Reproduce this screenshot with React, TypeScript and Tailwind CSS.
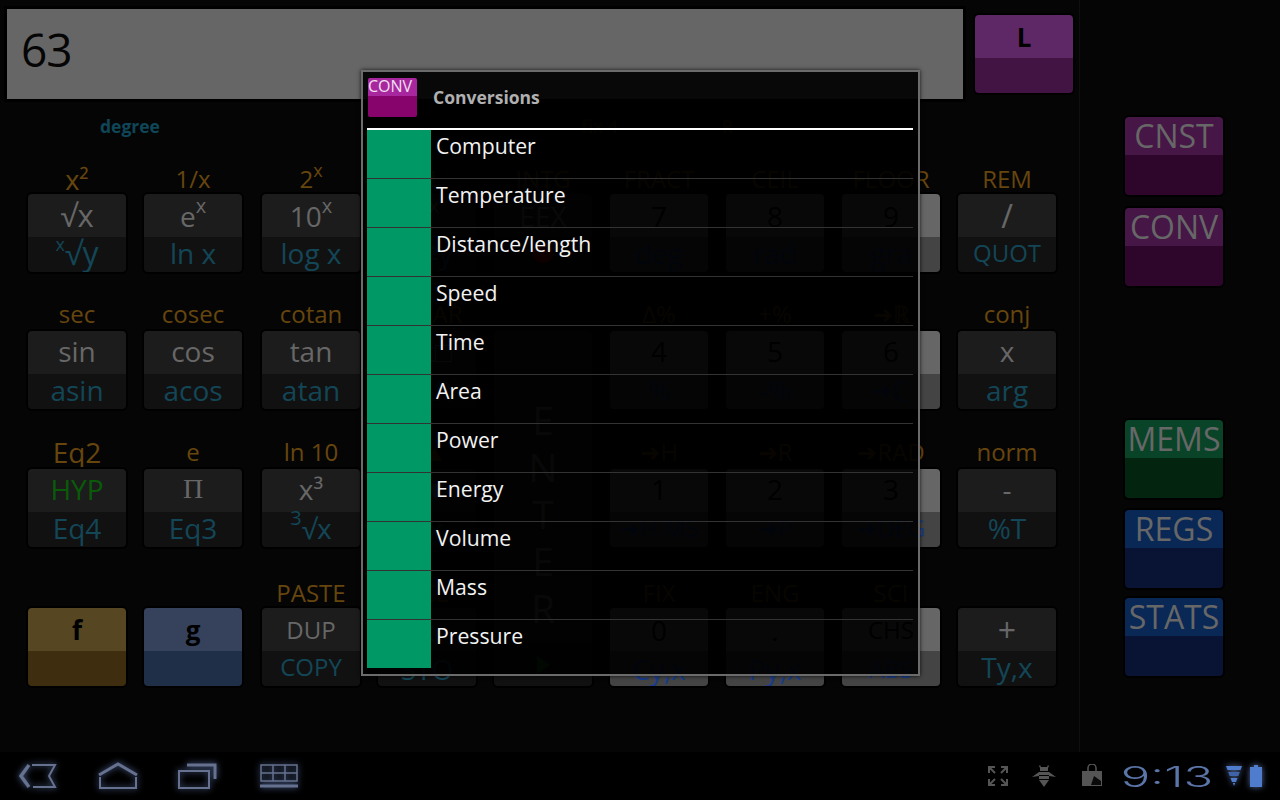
import React from "react";

type KeyDef = {
  label?: React.ReactNode;
  top?: React.ReactNode;
  bottom?: React.ReactNode;
  kind?: "dark" | "light" | "f" | "g";
  topClass?: string;
  bottomClass?: string;
};

const keyColors = {
  dark: ["bg-[#1c1c1c]", "bg-[#111112]", "text-[#676767]", "text-[#134656]"],
  light: ["bg-[#666666]", "bg-[#444444]", "text-[#000000]", "text-[#173c8c]"],
  f: ["bg-[#574622]", "bg-[#3e2d0e]", "text-black", "text-black"],
  g: ["bg-[#36425c]", "bg-[#1f2f47]", "text-black", "text-black"],
};

const X = () => <sup className="text-[20px]">x</sup>;
const Arrow = () => <span className="text-[24px]">➜</span>;
const small = "text-[24px]!";

const rows: KeyDef[][] = [
  [
    { label: <span className="text-[27px]">x²</span>, top: <span className="text-[31px]">√x</span>, bottom: <><sup className="text-[18px]">x</sup><span className="text-[32px]">√y</span></> },
    { label: "1/x", top: <>e<X /></>, bottom: "ln x" },
    { label: <>2<sup className="text-[18px]">x</sup></>, top: <>10<X /></>, bottom: "log x" },
    { label: "x!", top: <>y<X /></>, bottom: "x⇄y" },
    { label: "INTG", top: "EEX", bottom: <span className="inline-block w-5 h-5 rounded-full bg-[#c00000]" /> },
    { label: "FRACT", top: "7", bottom: "deg", kind: "light" },
    { label: "CEIL", top: "8", bottom: "rad", kind: "light" },
    { label: "FLOOR", top: "9", bottom: "gra", kind: "light" },
    { label: "REM", top: "/", bottom: "QUOT", topClass: "text-[32px]!", bottomClass: small },
  ],
  [
    { label: "sec", top: "sin", bottom: "asin" },
    { label: "cosec", top: "cos", bottom: "acos" },
    { label: "cotan", top: "tan", bottom: "atan" },
    { label: "CLEAR", top: "CL□", bottom: "CLR" },
    { label: "Δ%", top: "4", bottom: "%", kind: "light" },
    { label: "+%", top: "5", bottom: "-%", kind: "light" },
    { label: <><Arrow />ℝ</>, top: "6", bottom: <><Arrow />ℂ</>, kind: "light" },
    { label: "conj", top: "x", bottom: "arg" },
  ],
  [
    { label: <span className="text-[28px]">Eq2</span>, top: "HYP", bottom: "Eq4", topClass: "text-[#0a5a0a]!" },
    { label: "e", top: "Π", bottom: "Eq3", topClass: "font-['Liberation_Serif',serif]" },
    { label: "ln 10", top: "x³", bottom: <><sup className="text-[20px]">3</sup>√x</> },
    { label: "R▲", top: "R▼", bottom: "Rx" },
    { label: <><Arrow />H</>, top: "1", bottom: <><Arrow />H.MS</>, kind: "light", bottomClass: small },
    { label: <><Arrow />R</>, top: "2", bottom: <><Arrow />P</>, kind: "light", bottomClass: small },
    { label: <><Arrow />RAD</>, top: "3", bottom: <><Arrow />DEG</>, kind: "light", bottomClass: small },
    { label: "norm", top: "-", bottom: "%T" },
  ],
  [
    { top: "f", kind: "f", topClass: "font-bold text-[26px]!" },
    { top: "g", kind: "g", topClass: "font-bold text-[26px]!" },
    { label: "PASTE", top: "DUP", bottom: "COPY", topClass: small, bottomClass: small },
    { label: "RCL", top: "x", bottom: "STO", bottomClass: "pb-0!" },
    { label: "FIX", top: "0", bottom: "Cy,x", kind: "light", bottomClass: "pb-0!" },
    { label: "ENG", top: ".", bottom: "Py,x", kind: "light", bottomClass: "pb-0!" },
    { label: "SCI", top: "CHS", bottom: "ABS", kind: "light", topClass: small, bottomClass: "text-[24px]! pb-0!" },
    { top: "+", bottom: "Ty,x", topClass: "text-[32px]!" },
  ],
];

const conversions = [
  "Computer",
  "Temperature",
  "Distance/length",
  "Speed",
  "Time",
  "Area",
  "Power",
  "Energy",
  "Volume",
  "Mass",
  "Pressure",
];

const CalcKey = ({ def, row }: { def: KeyDef; row: number }) => {
  const c = keyColors[def.kind ?? "dark"];
  const midRow = row === 1 || row === 2;
  return (
    <div className="flex flex-col items-center w-[98px]">
      <div className={`h-[30px] w-[120px] flex items-center justify-center text-[24px] leading-none text-[#67450e] whitespace-nowrap ${midRow ? "pb-[4px]" : ""}`}>
        {def.label}
      </div>
      <div className="w-[98px] h-[78px] rounded-[4px] overflow-hidden flex flex-col shadow-[0_0_0_2px_#000]">
        <div className={`h-[43px] flex items-center justify-center text-[28px] leading-none whitespace-nowrap ${midRow ? "pb-[4px]" : ""} ${c[0]} ${c[2]} ${def.topClass ?? ""}`}>
          {def.top}
        </div>
        <div className={`h-[35px] flex items-center justify-center text-[28px] leading-none whitespace-nowrap pb-[4px] ${c[1]} ${c[3]} ${def.bottomClass ?? ""}`}>
          {def.bottom}
        </div>
      </div>
    </div>
  );
};

const EnterKey = () => (
  <div className="w-[98px] row-span-3 col-start-5 pt-[30px] h-[385px]">
    <div className="h-[355px] rounded-[4px] overflow-hidden flex flex-col shadow-[0_0_0_2px_#000]">
      <div className="h-[312px] bg-[#1c1c1c] flex flex-col items-center justify-end pb-[12px] text-[39px] leading-[47px] text-[#676767]">
        <span>E</span>
        <span>N</span>
        <span>T</span>
        <span>E</span>
        <span>R</span>
      </div>
      <div className="h-[43px] bg-[#111112] flex items-center justify-center">
        <svg width="14" height="18" viewBox="0 0 14 18">
          <path d="M1 0 L14 9 L1 18 Z" fill="#0a6a12" />
        </svg>
      </div>
    </div>
  </div>
);

const SideKey = ({ text, top, bottom, className }: { text: string; top: string; bottom: string; className?: string }) => (
  <div className={`w-[98px] h-[78px] rounded-[4px] overflow-hidden flex flex-col shadow-[0_0_0_2px_#000] ${className ?? ""}`}>
    <div className={`h-[38px] flex items-center justify-center text-[32px] leading-none text-[#676767] whitespace-nowrap ${top}`}>
      {text}
    </div>
    <div className={`flex-1 ${bottom}`} />
  </div>
);

const navIcon = "drop-shadow-[0_0_3px_rgba(120,150,220,0.7)]";

export default function App() {
  return (
    <div className="relative w-[1280px] h-[800px] overflow-hidden bg-[#050505] font-['Open_Sans',sans-serif] flex flex-col">
      <div className="flex h-[752px]">
        <div className="w-[1080px] border-r border-[#0f0f0f]">
          <div className="flex h-[99px]">
            <div className="ml-[7px] mt-[9px] w-[956px] h-[90px] bg-[#666666] shadow-[0_0_0_3px_#000] pl-[14px] flex items-center text-[46px] tracking-[-1px] text-[#050505] leading-none pb-[11px]">
              63
            </div>
            <div className="ml-[12px] mt-[15px] w-[98px] h-[78px] rounded-[4px] overflow-hidden flex flex-col shadow-[0_0_0_2px_#000]">
              <div className="h-[43px] bg-[#5e2766] flex items-center justify-center font-bold text-[26px] leading-none text-black">L</div>
              <div className="flex-1 bg-[#411443]" />
            </div>
          </div>
          <div className="h-[65px] flex pt-[15px] text-[17.5px] font-bold text-[#0f4658] leading-[24px]">
            <span className="ml-[100px]">degree</span>
            <span className="ml-[421px] text-[#3d2c08]">fix 4</span>
            <span className="ml-[104px] text-[#3d2c08]">R</span>
          </div>
          <div className="pl-[28px] grid grid-cols-[116px_118px_116px_116px_116px_116px_116px_116px_100px] grid-rows-[137px_138px_139px_108px]">
            {rows[0].map((k, i) => (
              <CalcKey key={i} def={k} row={0} />
            ))}
            {rows[1].slice(0, 4).map((k, i) => (
              <CalcKey key={i} def={k} row={1} />
            ))}
            <EnterKey />
            {rows[1].slice(4).map((k, i) => (
              <CalcKey key={i} def={k} row={1} />
            ))}
            {rows[2].slice(0, 4).map((k, i) => (
              <CalcKey key={i} def={k} row={2} />
            ))}
            {rows[2].slice(4).map((k, i) => (
              <div key={i} className={i === 0 ? "col-start-6" : ""}>
                <CalcKey def={k} row={2} />
              </div>
            ))}
            {rows[3].slice(0, 4).map((k, i) => (
              <CalcKey key={i} def={k} row={3} />
            ))}
            {rows[3].slice(4).map((k, i) => (
              <div key={i} className={i === 0 ? "col-start-6" : ""}>
                <CalcKey def={k} row={3} />
              </div>
            ))}
          </div>
        </div>
        <div className="flex-1 pl-[45px] pt-[117px] flex flex-col">
          <SideKey text="CNST" top="bg-[#451646]" bottom="bg-[#2e052b]" />
          <SideKey text="CONV" top="bg-[#451646]" bottom="bg-[#2e052b]" className="mt-[13px]" />
          <SideKey text="MEMS" top="bg-[#094429]" bottom="bg-[#03240e]" className="mt-[134px]" />
          <SideKey text="REGS" top="bg-[#0a2856]" bottom="bg-[#091333]" className="mt-[12px]" />
          <SideKey text="STATS" top="bg-[#0a2856]" bottom="bg-[#091333]" className="mt-[10px]" />
        </div>
      </div>

      <div className="h-[48px] bg-black flex items-center justify-between">
        <div className="flex items-center">
          <svg className={`ml-[18px] ${navIcon}`} width="40" height="28" viewBox="0 0 40 28" fill="none" stroke="#65718f">
            <path d="M11 3 L3 14 L11 25" strokeWidth="3.5" />
            <path d="M14 3 H37 L31 14 L37 25 H15" strokeWidth="2" />
          </svg>
          <svg className={`ml-[39px] ${navIcon}`} width="42" height="28" viewBox="0 0 42 28" fill="none" stroke="#65718f">
            <path d="M2 13 L21 2 L40 13" strokeWidth="3" />
            <path d="M3 15 V26 H39 V15" strokeWidth="2" />
          </svg>
          <svg className={`ml-[38px] ${navIcon}`} width="40" height="28" viewBox="0 0 40 28" fill="none" stroke="#65718f">
            <path d="M10 3 H38 V17" strokeWidth="3" />
            <rect x="2" y="9" width="30" height="17" strokeWidth="2" />
          </svg>
          <svg className={`ml-[43px] ${navIcon}`} width="38" height="28" viewBox="0 0 38 28" fill="none" stroke="#65718f">
            <path d="M1 3 H37 V19 H1 Z M1 11 H37 M13 3 V19 M25 3 V19" strokeWidth="1.5" />
            <path d="M0 24 H38" strokeWidth="3" />
          </svg>
        </div>
        <div className="flex items-center">
          <svg width="20" height="20" viewBox="0 0 20 20" fill="none" stroke="#555555" strokeWidth="2">
            <path d="M1 7 V1 H7 M1 1 L7 7 M13 1 H19 V7 M19 1 L13 7 M1 13 V19 H7 M1 19 L7 13 M19 13 V19 H13 M19 19 L13 13" />
          </svg>
          <svg className="ml-[24px]" width="24" height="24" viewBox="0 0 24 24" fill="#555555">
            <path d="M8 1 L9 3 H15 L16 1 L17 2 L16 4 V7 H8 V4 L7 2 Z" />
            <rect x="7" y="8" width="10" height="3" />
            <rect x="7" y="12" width="10" height="3" />
            <path d="M7 16 H17 L12 23 Z" />
            <path d="M0 13 L7 8 V12 Z M24 13 L17 8 V12 Z" />
          </svg>
          <svg className="ml-[25px]" width="22" height="24" viewBox="0 0 22 24" fill="none">
            <path d="M7 7 V4 A4 4 0 0 1 15 4 V7" stroke="#555555" strokeWidth="1.5" />
            <path d="M1 7 H21 V22 H1 Z" fill="#555555" />
            <path d="M10 21 L13 12 L20 17 V21 Z" fill="#0a0a0a" />
          </svg>
          <div className="ml-[21px] w-[86px] flex justify-center text-[28px] leading-none font-['Inter',sans-serif] font-light text-[#5a75a8] [transform:scaleX(1.75)] pt-[1px]">
            9:13
          </div>
          <svg className={`ml-[16px] ${navIcon}`} width="16" height="20" viewBox="0 0 16 20">
            <path d="M0 0 H16 L14.5 4 H1.5 Z" fill="#4f7ccc" />
            <path d="M2.2 6 H13.8 L12.3 10 H3.7 Z" fill="#3f63a8" />
            <path d="M4.5 12 H11.5 L10 16 H6 Z" fill="#4f7ccc" />
            <path d="M6.8 17 H9.2 L8 20 Z" fill="#4f7ccc" />
          </svg>
          <svg className={`ml-[8px] mr-[18px] ${navIcon}`} width="12" height="22" viewBox="0 0 12 22">
            <path d="M4 0 H8 V2 H12 V22 H0 V2 H4 Z" fill="#4f7ccc" />
          </svg>
        </div>
      </div>

      {/* dialog sits over the dimmed calculator */}
      <div className="absolute left-[361px] top-[70px] w-[559px] h-[606px] border-2 border-[#6b6b6b] bg-black/[0.92] shadow-[0_0_4px_rgba(0,0,0,0.8)]">
        <div className="h-[56px] flex pl-[5px] pt-[6px]">
          <div className="w-[49px] h-[39px] rounded-[2px] overflow-hidden flex flex-col">
            <div className="h-[18px] bg-[#a8279f] text-[16px] leading-[16px] text-[#f0e0f0] text-left whitespace-nowrap">CONV</div>
            <div className="flex-1 bg-[#87046c]" />
          </div>
          <div className="ml-[16px] mt-[8px] text-[17.5px] leading-[22px] font-bold text-[#b0b0b0]">Conversions</div>
        </div>
        <div className="ml-[4px] mr-[5px] h-[2px] bg-white" />
        <div className="ml-[4px] mr-[5px]">
          {conversions.map((name, i) => (
            <div key={name} className={`flex ${i < conversions.length - 1 ? "h-[49px] border-b border-[#333333]" : "h-[48px]"}`}>
              <div className="w-[64px] bg-[#009966]" />
              <div className="pl-[5px] text-[21.2px] leading-[31px] text-[#f2f2f2]">{name}</div>
            </div>
          ))}
        </div>
      </div>
    </div>
  );
}
